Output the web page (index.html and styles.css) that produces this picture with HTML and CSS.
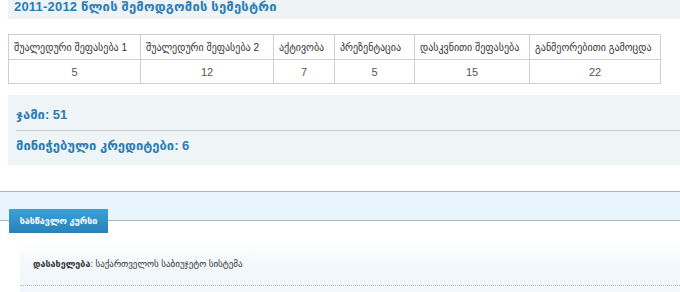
FILE: index.html
```html
<!DOCTYPE html>
<html lang="ka">
<head>
<meta charset="utf-8">
<title>სემესტრი</title>
<link rel="stylesheet" href="styles.css">
</head>
<body>
<div class="semester">
  <h2 class="sem-title">2011-2012 წლის შემოდგომის სემესტრი</h2>
  <table class="grades">
    <colgroup>
      <col class="c1"><col class="c2"><col class="c3"><col class="c4"><col class="c5"><col class="c6">
    </colgroup>
    <thead>
      <tr>
        <th>შუალედური შეფასება 1</th>
        <th>შუალედური შეფასება 2</th>
        <th>აქტივობა</th>
        <th>პრეზენტაცია</th>
        <th>დასკვნითი შეფასება</th>
        <th>განმეორებითი გამოცდა</th>
      </tr>
    </thead>
    <tbody>
      <tr><td>5</td><td>12</td><td>7</td><td>5</td><td>15</td><td>22</td></tr>
    </tbody>
  </table>
  <div class="summary">
    <div class="sum-row first">ჯამი: 51</div>
    <div class="sum-row">მინიჭებული კრედიტები: 6</div>
  </div>
</div>
<div class="course-head">
  <span class="tab">სასწავლო კურსი</span>
</div>
<div class="course-box">
  <div class="course-line"><b>დასახელება</b>: საქართველოს საბიუჯეტო სისტემა</div>
</div>
</body>
</html>
```

FILE: styles.css
```css
html, body {
  margin: 0;
  padding: 0;
  background: #fff;
  overflow: hidden;
}
body {
  font-family: "Liberation Sans", "DejaVu Sans", sans-serif;
  color: #333;
}
.semester {
  margin-left: 8px;
}
.sem-title {
  margin: 0;
  height: 19px;
  padding-left: 6px;
  background: #eef3f6;
  color: #2a7db4;
  font-size: 13px;
  line-height: 14px;
  font-weight: bold;
  letter-spacing: 0.2px;
}
.grades {
  margin-top: 15px;
  border-collapse: collapse;
  table-layout: fixed;
  width: 652px;
  font-size: 10px;
}
.grades .c1 { width: 132px; }
.grades .c2 { width: 133px; }
.grades .c3 { width: 61px; }
.grades .c4 { width: 80px; }
.grades .c5 { width: 115px; }
.grades .c6 { width: 131px; }
.grades th, .grades td {
  border: 1px solid #cfcfcf;
  white-space: nowrap;
  overflow: hidden;
}
.grades th {
  height: 24px;
  padding: 0 5px;
  text-align: left;
  font-weight: normal;
  color: #333;
}
.grades td {
  height: 23px;
  padding: 0;
  text-align: center;
  color: #555;
  font-size: 11px;
}
.summary {
  margin-top: 11px;
  background: #eff4f7;
  padding: 12px 0 11px 8px;
}
.sum-row {
  font-size: 13px;
  line-height: 16px;
  font-weight: bold;
  color: #2a7db4;
  padding-top: 7px;
}
.sum-row.first {
  padding-top: 0;
  padding-bottom: 7px;
  border-bottom: 1px solid #c9d0d4;
}
.course-head {
  margin-top: 26px;
  height: 28px;
  background: #e9f5fc;
  border-top: 1px solid #a8b5bc;
  border-bottom: 1px solid #a8b5bc;
  display: flex;
  align-items: flex-end;
  padding-left: 9px;
}
.tab {
  display: block;
  width: 99px;
  height: 24px;
  margin-bottom: -13px;
  background: linear-gradient(#3ba1d8, #2a81b8);
  color: #fff;
  font-size: 9px;
  font-weight: bold;
  line-height: 24px;
  text-align: center;
  position: relative;
}
.course-box {
  margin: 23px 0 0 20px;
  height: 60px;
  background: linear-gradient(#fdfefe, #f2f7fb 40%);
}
.course-line {
  padding: 14px 0 0 13px;
  height: 27px;
  font-size: 9px;
  line-height: 12px;
  color: #333;
  border-bottom: 1px dotted #b9bec2;
}
.course-line b {
  color: #333;
}
```
